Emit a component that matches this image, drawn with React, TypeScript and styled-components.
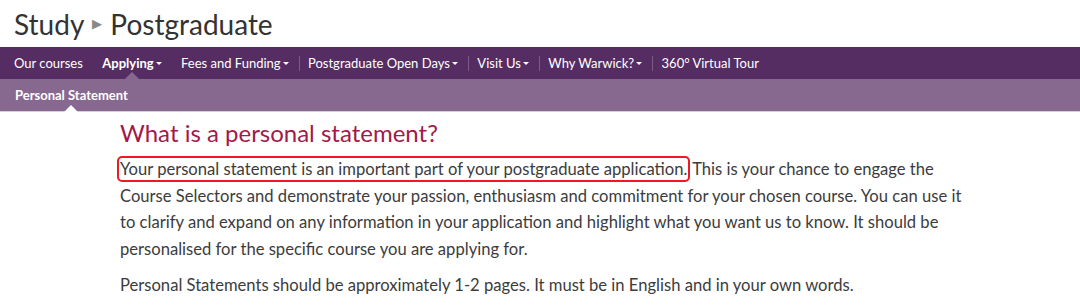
import React, { FC } from 'react';
import styled, { createGlobalStyle } from 'styled-components';

const GlobalStyle = createGlobalStyle`
    body {
        margin: 0;
        background: #fff;
        font-family: Lato, 'Open Sans', sans-serif;
    }
`;

const Page = styled.div`
    width: 1080px;
    height: 305px;
    overflow: hidden;
`;

const TitleBar = styled.div`
    height: 47px;
    display: flex;
    align-items: center;
    padding-left: 14px;
    box-sizing: border-box;
`;

const Title = styled.h1`
    margin: 0;
    font-size: 28px;
    font-weight: 400;
    color: #333;
    display: flex;
    align-items: center;
    gap: 8px;
    line-height: 1;
`;

const Crumb = styled.span`
    color: #888;
    font-size: 13px;
`;

const NavBar = styled.nav`
    height: 32px;
    background: #552d62;
    display: flex;
    align-items: center;
    padding-left: 4px;
`;

const NavItem = styled.a<{ $active?: boolean; $first?: boolean }>`
    position: relative;
    height: 100%;
    display: flex;
    align-items: center;
    padding: 0 10px 0 ${(p) => (p.$first ? '10px' : '9.4px')};
    color: #fff;
    font-size: 13px;
    font-weight: ${(p) => (p.$active ? 700 : 400)};
    text-decoration: none;
    white-space: nowrap;

    & + &::before {
        content: '';
        position: absolute;
        left: 0;
        top: 9px;
        height: 15px;
        border-left: 1px solid #7b5b85;
    }

    ${(p) =>
        p.$active &&
        `
        &::after {
            content: '';
            position: absolute;
            bottom: 0;
            left: 50%;
            margin-left: -7px;
            border: 7px solid transparent;
            border-top: 0;
            border-bottom-color: #87698f;
        }
    `}
`;

const Caret = styled.span`
    display: inline-block;
    margin-left: 2px;
    border-left: 3px solid transparent;
    border-right: 3px solid transparent;
    border-top: 3px solid #fff;
    vertical-align: middle;
`;

const SubNav = styled.div`
    height: 32px;
    background: #87698f;
    border-bottom: 1px solid #d8cfdb;
    display: flex;
    align-items: center;
    padding-left: 4px;
`;

const SubItem = styled.span`
    position: relative;
    height: 100%;
    display: flex;
    align-items: center;
    padding: 0 11px;
    color: #fff;
    font-size: 13px;
    font-weight: 700;

    &::after {
        content: '';
        position: absolute;
        bottom: -1px;
        left: 50%;
        margin-left: -7px;
        border: 7px solid transparent;
        border-top: 0;
        border-bottom-color: #fff;
    }
`;

const Content = styled.main`
    width: 850px;
    margin-left: 120px;
    padding-top: 5px;
    color: #3c3c3c;
`;

const Heading = styled.h2`
    margin: 0 0 7px;
    font-size: 24px;
    font-weight: 400;
    line-height: 32px;
    color: #a3194a;
`;

const Para = styled.p`
    margin: 0 0 9.5px;
    font-size: 16.6px;
    line-height: 26.7px;
`;

const Highlight = styled.span`
    outline: 2.5px solid #ee1a1f;
    border-radius: 3px;
    padding: 1px 1px 1px 1px;
    margin-left: -1px;
`;

const navItems = [
    { label: 'Our courses' },
    { label: 'Applying', caret: true, active: true },
    { label: 'Fees and Funding', caret: true },
    { label: 'Postgraduate Open Days', caret: true },
    { label: 'Visit Us', caret: true },
    { label: 'Why Warwick?', caret: true },
    { label: '360° Virtual Tour' },
];

const App: FC = () => (
    <Page>
        <GlobalStyle />
        <TitleBar>
            <Title>
                Study <Crumb>▶</Crumb> Postgraduate
            </Title>
        </TitleBar>
        <NavBar>
            {navItems.map((item, i) => (
                <NavItem key={item.label} $active={item.active} $first={i === 0}>
                    {item.label}
                    {item.caret && <Caret />}
                </NavItem>
            ))}
        </NavBar>
        <SubNav>
            <SubItem>Personal Statement</SubItem>
        </SubNav>
        <Content>
            <Heading>What is a personal statement?</Heading>
            <Para>
                <Highlight>Your personal statement is an important part of your postgraduate application.</Highlight>{' '}
                This is your chance to engage the Course Selectors and demonstrate your passion, enthusiasm and
                commitment for your chosen course. You can use it to clarify and expand on any information in your
                application and highlight what you want us to know. It should be personalised for the specific course
                you are applying for.
            </Para>
            <Para>Personal Statements should be approximately 1-2 pages. It must be in English and in your own words.</Para>
        </Content>
    </Page>
);

export default App;
